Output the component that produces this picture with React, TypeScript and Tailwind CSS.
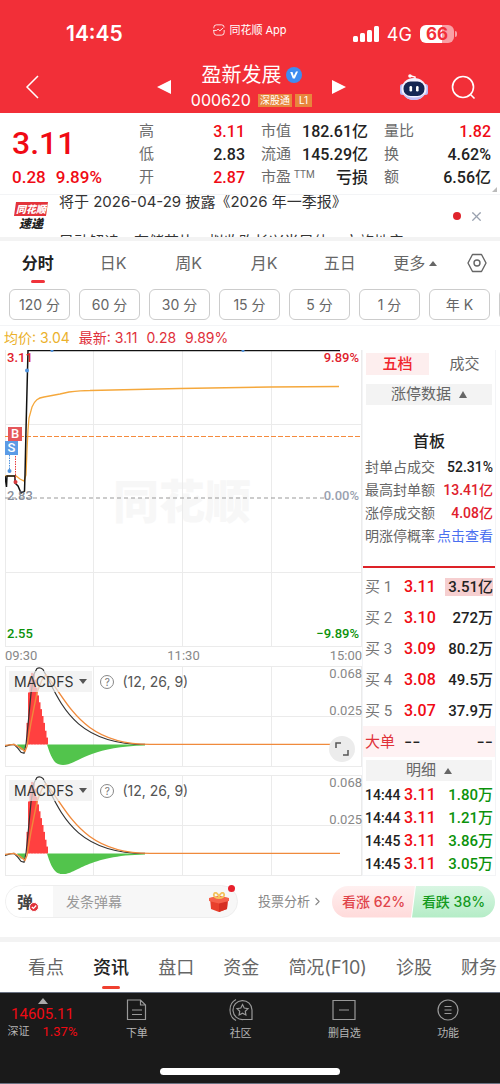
import { ReactNode } from "react";
import { FiChevronRight, FiX } from "react-icons/fi";
import clsx from "clsx";

interface Stat {
  label: string;
  value: string;
  sup?: string;
  red?: boolean;
}

const statGroups: Stat[][] = [
  [
    { label: "高", value: "3.11", red: true },
    { label: "低", value: "2.83" },
    { label: "开", value: "2.87", red: true },
  ],
  [
    { label: "市值", value: "182.61亿" },
    { label: "流通", value: "145.29亿" },
    { label: "市盈", value: "亏损", sup: "TTM" },
  ],
  [
    { label: "量比", value: "1.82", red: true },
    { label: "换", value: "4.62%" },
    { label: "额", value: "6.56亿" },
  ],
];

const periods = ["分时", "日K", "周K", "月K", "五日"];
const minutes = ["120 分", "60 分", "30 分", "15 分", "5 分", "1 分", "年 K", "季 K"];

const limitRows = [
  { label: "封单占成交", value: "52.31%", color: "text-[#222]" },
  { label: "最高封单额", value: "13.41亿", color: "text-[#e0202c]" },
  { label: "涨停成交额", value: "4.08亿", color: "text-[#e0202c]" },
];

const bids = [
  { label: "买 1", price: "3.11", amount: "3.51亿" },
  { label: "买 2", price: "3.10", amount: "272万" },
  { label: "买 3", price: "3.09", amount: "80.2万" },
  { label: "买 4", price: "3.08", amount: "49.5万" },
  { label: "买 5", price: "3.07", amount: "37.9万" },
];

const trades = [
  { time: "14:44", price: "3.11", amount: "1.80万" },
  { time: "14:44", price: "3.11", amount: "1.21万" },
  { time: "14:45", price: "3.11", amount: "3.86万" },
  { time: "14:45", price: "3.11", amount: "3.05万" },
];

const infoTabs = ["看点", "资讯", "盘口", "资金", "简况(F10)", "诊股", "财务"];

// one red bar every 1.5 units, growing up from the zero line
const redBars = [22, 53, 69, 73, 72, 66, 58, 50, 43, 36, 29, 22, 14, 7];

function StatusBar() {
  return (
    <div className="grid grid-cols-3 items-center px-[30px] pt-5">
      <p className="pl-9 text-[21px] leading-7 font-semibold">14:45</p>
      <p className="flex -translate-y-1 items-center justify-center gap-1 whitespace-nowrap text-[11px]">
        <svg viewBox="0 0 14 14" className="h-3 w-3" fill="none" stroke="currentColor">
          <path d="M1 5V4a3 3 0 0 1 3-3h6a3 3 0 0 1 3 3M13 7v3a3 3 0 0 1-3 3H4a3 3 0 0 1-3-3V8M0 7.500h4l2-1.500 2 2 4-3.500" />
        </svg>
        同花顺 App
      </p>
      <div className="flex items-center justify-end gap-2 pr-4">
        <svg viewBox="0 0 26 16" className="h-4 w-[26px] shrink-0" fill="currentColor">
          <rect x="0" y="10" width="5" height="6" rx="1.500" />
          <rect x="7" y="7" width="5" height="9" rx="1.500" />
          <rect x="14" y="4" width="5" height="12" rx="1.500" />
          <rect x="21" y="0" width="5" height="16" rx="1.500" />
        </svg>
        <span className="text-[18px]">4G</span>
        <span className="relative rounded-md bg-linear-to-r from-white from-65% to-[#f9a0a5] to-65% px-[6px] text-[17px] leading-[18px] font-bold text-[#f22f38]">
          66
          <i className="absolute top-[6px] -right-[3px] h-[6px] w-[2px] rounded-r bg-[#f9a0a5]" />
        </span>
      </div>
    </div>
  );
}

function RobotIcon() {
  return (
    <svg viewBox="0 0 30 28" className="h-7 w-[30px]">
      <circle cx="11" cy="3" r="1.800" fill="#fff" />
      <path d="M12 3 16 4v3" stroke="#fff" strokeWidth="1.500" fill="none" />
      <rect x="1" y="11" width="5" height="11" rx="2.500" fill="#b9b8f5" />
      <rect x="24" y="11" width="5" height="11" rx="2.500" fill="#b9b8f5" />
      <ellipse cx="15" cy="16" rx="12.500" ry="11" fill="#f3f1ff" />
      <path d="M4 20c2 5 6 7 11 7s9-2 11-7c-2 3-6 4.500-11 4.500S6 23 4 20z" fill="#c3bdf4" />
      <rect x="4.500" y="8.500" width="21" height="14.500" rx="7" fill="#162653" />
      <rect x="10.500" y="13" width="2.600" height="5.500" rx="1.200" fill="#fff" />
      <rect x="17" y="13" width="2.600" height="5.500" rx="1.200" fill="#fff" />
    </svg>
  );
}

function Header() {
  return (
    <header className="bg-[#f22f38] pb-px text-white">
      <StatusBar />
      <div className="flex items-center justify-between pt-[14px] pr-6 pl-[25px]">
        <button aria-label="返回" className="w-[79px]">
          <svg viewBox="0 0 14 24" className="h-6 w-[14px]" fill="none" stroke="currentColor" strokeWidth="1.500">
            <path d="M13 1 2 12l11 11" />
          </svg>
        </button>
        <div className="flex items-center gap-5">
          <button aria-label="上一只">
            <svg viewBox="0 0 14 14" className="h-[14px] w-[14px]" fill="currentColor">
              <path d="M14 0v14L0 7z" />
            </svg>
          </button>
          <div>
            <h1 className="flex h-[26px] items-center justify-center gap-1 text-[20px] leading-[26px]">
              盈新发展
              <svg viewBox="0 0 16 16" className="h-4 w-4">
                <circle cx="8" cy="8" r="8" fill="#3f8cf0" />
                <path d="M4.200 5h2.300l1.300 4L10 4.500h2L8.800 11.500H6.800z" fill="#fff" />
              </svg>
            </h1>
            <p className="flex h-6 items-center gap-[3px] text-[16px] leading-6">
              <span className="mr-1">000620</span>
              <span className="bg-[#e8863c] px-[2px] text-[10px] leading-[13px]">深股通</span>
              <span className="bg-[#e8863c] px-1 text-[10px] leading-[13px]">L1</span>
            </p>
          </div>
          <button aria-label="下一只">
            <svg viewBox="0 0 14 14" className="h-[14px] w-[14px]" fill="currentColor">
              <path d="M0 0v14l14-7z" />
            </svg>
          </button>
        </div>
        <div className="flex items-center gap-[22px]">
          <button aria-label="助手">
            <RobotIcon />
          </button>
          <button aria-label="搜索">
            <svg viewBox="0 0 25 25" className="h-[25px] w-[25px]" fill="none" stroke="currentColor" strokeWidth="1.600">
              <circle cx="12" cy="12" r="10.500" />
              <path d="m19.500 19.500 4 4" />
            </svg>
          </button>
        </div>
      </div>
    </header>
  );
}

function Quote() {
  return (
    <section className="relative flex border-b border-gray-100 px-[9px] pt-[7px] pb-[5px] font-[Roboto,'Noto_Sans_CJK_SC',sans-serif]">
      <div className="w-[130px] pl-[3px] font-medium text-[#f00a14]">
        <p className="text-[32px] leading-[46px]">3.11</p>
        <p className="flex gap-[10px] text-[17px] leading-[23px]">
          <span>0.28</span>
          <span>9.89%</span>
        </p>
      </div>
      <div className="grid flex-1 grid-cols-[106px_107px_1fr] gap-x-4">
        {statGroups.map((group, i) => (
          <dl key={i}>
            {group.map((stat) => (
              <div key={stat.label} className="flex justify-between text-[16px] leading-[23px]">
                <dt className="flex text-[15px] text-[#6b6b6b]">
                  {stat.label}
                  {stat.sup && <span className="ml-[3px] text-[10px] leading-[18px]">{stat.sup}</span>}
                </dt>
                <dd className={clsx("font-medium", stat.red ? "text-[#f00a14]" : "text-[#222]")}>
                  {stat.value}
                </dd>
              </div>
            ))}
          </dl>
        ))}
      </div>
      <svg viewBox="0 0 5 5" className="absolute right-[3px] bottom-[2px] h-[5px] w-[5px]" fill="#bbb">
        <path d="M5 0v5H0z" />
      </svg>
    </section>
  );
}

function News() {
  return (
    <section className="flex h-[46px] overflow-hidden border-b-4 border-[#f3f3f3] pr-4 pl-[14px]">
      <div className="mt-[7px] w-[34px] shrink-0 text-center font-black italic">
        <p className="bg-[#e3343b] text-[10px] leading-[14px] text-white [clip-path:polygon(2px_0,100%_0,calc(100%-2px)_100%,0_100%)]">
          同花顺
        </p>
        <p className="text-[12px] leading-[15px] text-[#222]">速递</p>
      </div>
      <div className="-mt-[6px] ml-[11px] flex-1 text-[15px] leading-[26px] text-[#333]">
        <p>将于 2026-04-29 披露《2026 年一季报》</p>
        <p className="mt-[14px] whitespace-nowrap">异动解读：存储芯片，拟收购长兴半导体，文旅地产</p>
      </div>
      <div className="flex items-center gap-2">
        <i className="h-2 w-2 rounded-full bg-[#e0242c]" />
        <button aria-label="关闭" className="text-[15px] text-gray-400">
          <FiX />
        </button>
      </div>
    </section>
  );
}

function PeriodTabs() {
  return (
    <nav className="border-b border-gray-100 pb-[5px]">
      <div className="flex items-center text-[16px] text-[#666]">
        {periods.map((item, i) => (
          <button key={item} className={clsx("relative h-11 flex-1", i === 0 && "font-bold text-[#222]")}>
            {item}
            {i === 0 && (
              <i className="absolute bottom-[2px] left-1/2 h-[3px] w-[14px] -translate-x-1/2 rounded bg-[#f0333a]" />
            )}
          </button>
        ))}
        <button className="flex h-11 flex-1 items-center justify-center gap-1">
          更多
          <svg viewBox="0 0 8 5" className="h-[5px] w-2" fill="currentColor">
            <path d="M4 0l4 5H0z" />
          </svg>
        </button>
        <button aria-label="设置" className="flex w-[47px] justify-center">
          <svg viewBox="0 0 20 20" className="h-5 w-5" fill="none" stroke="currentColor" strokeWidth="1.400">
            <path d="M5.500 1.500h9l4.500 8.500-4.500 8.500h-9L1 10z" strokeLinejoin="round" />
            <circle cx="10" cy="10" r="3" />
          </svg>
        </button>
      </div>
      <div className="flex gap-[9px] overflow-hidden pt-1 pl-[9px]">
        {minutes.map((item) => (
          <button
            key={item}
            className="h-[31px] w-[61px] shrink-0 rounded-md border border-[#ccc] text-[14px] text-[#666]"
          >
            {item}
          </button>
        ))}
      </div>
    </nav>
  );
}

function PriceChart() {
  return (
    <div className="relative h-[297px] font-[Roboto,sans-serif] text-[13px] leading-4 font-medium">
      <p className="absolute top-[122px] left-[108px] font-['Noto_Sans_CJK_SC',sans-serif] text-[46px] leading-[52px] font-black text-[#f7f7f7]">
        同花顺
      </p>
      <svg viewBox="5 350 357 297" preserveAspectRatio="none" className="absolute inset-0 h-full w-full" fill="none">
        <path d="M5.500 350v297M93.500 350v297M182.500 350v297M271.500 350v297M361.500 350v297M5 424.500h357M5 572.500h357M5 646.500h357" stroke="#ebebeb" />
        <path d="M5 498h356" stroke="#999" strokeDasharray="4 3" />
        <path d="M5 436.500h356" stroke="#f58a3c" strokeWidth="1.200" strokeDasharray="5 2" />
        <path d="M5 476h11l4 3 4 2 2-6 1-25 1-20 1-12 3-11c3-7 6-9 12-10l16-3 9-2c8-1 12-1.500 21-1.500l90-2 90-1.500 69-.5" stroke="#f5a83c" strokeWidth="1.300" />
        <path d="M5 476l1.500 11 .5-11h8v7l3 3 3 7 2-1 1.500-1 .5-16 1-45 2-79.500H340" stroke="#111" strokeWidth="1.500" />
        <path d="M9.500 455v14" stroke="#4f93df" strokeDasharray="1.500 1" />
        <path d="M15.500 441v38" stroke="#e83c3c" strokeDasharray="1.500 1" />
        <g fill="#4f93df">
          <circle cx="9.500" cy="471" r="2" />
          <circle cx="27" cy="370.500" r="2" />
          <circle cx="52" cy="350.500" r="1.500" />
          <circle cx="243" cy="350.500" r="1.500" />
        </g>
        <circle cx="15.500" cy="482" r="2" fill="#d8383c" />
      </svg>
      <span className="absolute top-0 left-[2px] text-[#e0202c]">3.11</span>
      <span className="absolute top-0 right-[3px] text-[#e0202c]">9.89%</span>
      <span className="absolute top-[138px] left-[2px] text-gray-500/80">2.83</span>
      <span className="absolute top-[138px] right-[3px] bg-white text-gray-400">0.00%</span>
      <span className="absolute top-[276px] left-[2px] text-[#0b920b]">2.55</span>
      <span className="absolute top-[276px] right-[3px] text-[#0b920b]">−9.89%</span>
      <span className="absolute top-[77px] left-[3px] h-[14px] w-[14px] bg-[#e5575b] text-center leading-[14px] text-white">
        B
      </span>
      <span className="absolute top-[91px] left-0 h-[14px] w-[13px] bg-[#5b9be6] text-center leading-[14px] text-white">
        S
      </span>
    </div>
  );
}

function MacdChart({ name, children }: { name: string; children?: ReactNode }) {
  return (
    <div className="relative h-[101px] border-y border-[#ebebeb]">
      <svg viewBox="5 666 357 101" preserveAspectRatio="none" className="absolute inset-0 h-full w-full" fill="none">
        <path d="M5.500 666v101M93.500 666v101M182.500 666v101M271.500 666v101M361.500 666v101M5 716.500h357" stroke="#ebebeb" />
        {redBars.map((h, i) => (
          <rect key={i} x={26.5 + i * 1.5} y={745 - h} width="2" height={h} fill="#ff4040" />
        ))}
        <path d="M47 745c5 17 9 21 16 21 14 0 24-19 82-20v-1z" fill="#52c44c" />
        <path d="M17 745h9l-2 6-4-1z" fill="#52c44c" />
        <path
          d="M5 747l5-1.500 4-.5 4 4 3 4 3 1 2-9 2-20 3-32 3-20 3-5.500q3-1.500 6 1C60 700 72 745 145 745"
          stroke="#333"
          strokeWidth="1.200"
        />
        <path
          d="M5 746l9-1 6 3 5 4 2-5 4-24 6-31 5-13 4-5C68 700 80 745 150 745H340"
          stroke="#f08a3c"
          strokeWidth="1.400"
        />
      </svg>
      <div className="absolute top-1 left-1 flex items-center text-[14px] text-[#555]">
        <button aria-label={name} className="flex h-[21px] items-center gap-[6px] bg-[#eee]/70 px-[5px] text-[#333]">
          MACDFS
          <svg viewBox="0 0 8 5" className="h-[5px] w-2" fill="#555">
            <path d="M0 0h8L4 5z" />
          </svg>
        </button>
        <i className="ml-2 h-[14px] w-[14px] rounded-full border border-[#888] text-center text-[10px] leading-3 text-[#777] not-italic">
          ?
        </i>
        <span className="ml-2">(12, 26, 9)</span>
      </div>
      <div className="absolute -top-px right-0 font-[Roboto,sans-serif] text-[13px] leading-4 text-[#888]">
        <p>0.068</p>
        <p className="mt-[21px]">0.025</p>
      </div>
      {children}
    </div>
  );
}

function OrderPanel() {
  return (
    <aside className="w-[134px] shrink-0 border-x border-b border-gray-100 font-[Roboto,'Noto_Sans_CJK_SC',sans-serif] text-[15px]">
      <div className="grid grid-cols-2 px-[3px] pt-[3px] leading-[22px]">
        <button className="bg-[#fdeeee] font-medium text-[#f0242c]">五档</button>
        <button className="pl-2 text-[#666]">成交</button>
      </div>
      <button className="mx-[3px] mt-[9px] flex h-[21px] w-[126px] items-center justify-center gap-2 bg-[#f3f3f3] text-[#666]">
        涨停数据
        <svg viewBox="0 0 8 7" className="h-[7px] w-2" fill="currentColor">
          <path d="M4 0l4 7H0z" />
        </svg>
      </button>
      <h2 className="mt-[25px] text-center text-[16px] leading-6 font-medium text-[#222]">首板</h2>
      <div className="mt-[2px] px-[2px] text-[14px] leading-[23px]">
        {limitRows.map((row) => (
          <p key={row.label} className="flex justify-between text-[#666]">
            {row.label}
            <span className={clsx("font-medium", row.color)}>{row.value}</span>
          </p>
        ))}
        <p className="flex justify-between text-[#666]">
          明涨停概率
          <a href="#odds" className="text-[#4a6ff0]">点击查看</a>
        </p>
      </div>
      <div className="mt-[18px] border-t-2 border-[#dd2228] pt-[3px]">
        <table className="w-full leading-5">
          <tbody>
            {bids.map((bid, i) => (
              <tr key={bid.label} className="h-[31px]">
                <td className="w-[41px] pl-[2px] text-[#777]">{bid.label}</td>
                <td className="text-[16px] font-medium text-[#f00a14]">{bid.price}</td>
                <td className="pr-[2px] text-right font-medium text-[#222]">
                  <span className={clsx(i === 0 && "bg-[#f6cfd0] pl-[3px]")}>{bid.amount}</span>
                </td>
              </tr>
            ))}
            <tr className="h-[31px] bg-[#fef2f3] text-[#222]">
              <td className="pl-[2px] text-[#e0323a]">大单</td>
              <td className="font-[Inter] text-[18px]">--</td>
              <td className="pr-[2px] text-right font-[Inter] text-[18px]">--</td>
            </tr>
          </tbody>
        </table>
      </div>
      <button className="mx-[3px] mt-[3px] flex h-[21px] w-[126px] items-center justify-center gap-2 bg-[#f3f3f3] text-[#666]">
        明细
        <svg viewBox="0 0 8 6" className="h-[6px] w-2" fill="currentColor">
          <path d="M4 0l4 6H0z" />
        </svg>
      </button>
      <table className="mt-[2px] w-full leading-5 font-medium">
        <tbody>
          {trades.map((trade, i) => (
            <tr key={i} className="h-[23px]">
              <td className="w-[41px] pl-[2px] text-[14px] text-[#222]">{trade.time}</td>
              <td className="text-[16px] text-[#f00a14]">{trade.price}</td>
              <td className="pr-[2px] text-right text-[#0b920b]">{trade.amount}</td>
            </tr>
          ))}
        </tbody>
      </table>
    </aside>
  );
}

function Charts() {
  return (
    <section className="flex pr-1 pl-[5px]">
      <div className="min-w-0 flex-1">
        <PriceChart />
        <div className="grid h-[19px] grid-cols-3 font-[Roboto,sans-serif] text-[13px] leading-[18px] text-[#888]">
          <span>09:30</span>
          <span className="text-center">11:30</span>
          <span className="text-right">15:00</span>
        </div>
        <MacdChart name="指标一">
          <button
            aria-label="全屏"
            className="absolute right-[7px] bottom-1 grid h-[26px] w-[26px] place-items-center rounded-full bg-[#ececec]"
          >
            <svg viewBox="0 0 14 14" className="h-[14px] w-[14px]" fill="none" stroke="#555" strokeWidth="1.500">
              <path d="M1 6V1h5M13 8v5H8" />
            </svg>
          </button>
        </MacdChart>
        <div className="h-2" />
        <MacdChart name="指标二" />
      </div>
      <OrderPanel />
    </section>
  );
}

function GiftIcon() {
  return (
    <svg viewBox="0 0 20 20" className="h-5 w-5">
      <path d="M1 6 10 4l9 2-1 11-8 3-8-3z" fill="#e8402c" />
      <path d="M10 9v11l8-3 .8-9z" fill="#d62f22" />
      <path d="M0 6 10 4l10 2v3l-10 2.500L0 9z" fill="#f5604a" />
      <path d="M10 6C7 6 4 4.500 5 2s4-1 5 3c1-4 4-5.500 5-3s-2 4-5 4z" fill="none" stroke="#f3c25c" strokeWidth="1.800" />
    </svg>
  );
}

function Barrage() {
  return (
    <section className="flex items-center border-b-[5px] border-[#f3f3f3] pt-[9px] pr-[5px] pb-[19px] pl-[5px]">
      <div className="relative flex h-[33px] w-[233px] items-center rounded-full border border-[#eee] bg-[#f7f7f7]">
        <span className="relative flex h-full w-[47px] items-center rounded-l-full bg-white pl-[11px] text-[16px] font-bold text-[#444]">
          弹
          <svg viewBox="0 0 10 10" className="absolute right-[14px] bottom-[5px] h-[10px] w-[10px]" fill="none">
            <circle cx="5" cy="5" r="4.500" fill="#e0323a" stroke="#fff" />
            <path d="m2.800 5 1.700 1.500 2.700-3" stroke="#fff" strokeWidth="1.200" />
          </svg>
        </span>
        <input
          aria-label="弹幕"
          placeholder="发条弹幕"
          className="w-0 flex-1 pl-[13px] text-[14px] outline-none placeholder:text-[#999]"
        />
        <button aria-label="礼物" className="mr-2">
          <GiftIcon />
        </button>
        <i className="absolute -top-px right-[2px] h-[7px] w-[7px] rounded-full bg-[#e8202c]" />
      </div>
      <a href="#vote" className="mr-2 ml-auto flex items-center gap-px text-[13px] text-[#888]">
        投票分析
        <FiChevronRight />
      </a>
      <div className="flex text-[14px] leading-8 font-medium">
        <button className="w-[83px] rounded-l-full bg-linear-to-b from-[#fff0f0] to-[#ffdada] text-[#e0444a] [clip-path:polygon(0_0,100%_0,calc(100%-4px)_100%,0_100%)]">
          看涨 62%
        </button>
        <button className="-ml-[3px] w-[83px] rounded-r-full bg-linear-to-b from-[#d9f6e3] to-[#b4ecc6] text-[#149a1e] [clip-path:polygon(4px_0,100%_0,100%_100%,0_100%)]">
          看跌 38%
        </button>
      </div>
    </section>
  );
}

function InfoTabs() {
  return (
    <nav className="flex h-[50px] justify-between overflow-hidden pr-[3px] pl-7 text-[18px] whitespace-nowrap text-[#666]">
      {infoTabs.map((tab) => (
        <button key={tab} className={clsx("relative", tab === "资讯" && "font-medium text-[#222]")}>
          {tab}
          {tab === "资讯" && <i className="absolute bottom-[3px] left-[9px] h-[3px] w-[18px] rounded bg-[#f04030]" />}
        </button>
      ))}
    </nav>
  );
}

function BottomItem({ label, children }: { label: string; children: ReactNode }) {
  return (
    <button className="flex flex-1 flex-col items-center gap-[3px] text-[11px] leading-4">
      <svg viewBox="0 0 24 24" className="h-6 w-6" fill="none" stroke="#999" strokeWidth="1.200">
        {children}
      </svg>
      {label}
    </button>
  );
}

function BottomBar() {
  return (
    <footer className="border-t border-b border-gray-500 bg-[#1a1a1a] text-[#b5b5b5]">
      <div className="flex h-[75px] pt-[5px]">
        <div className="flex w-[85px] flex-col items-center font-[Roboto,'Noto_Sans_CJK_SC',sans-serif] text-[#f00a14]">
          <svg viewBox="0 0 10 6" className="h-[6px] w-[10px]" fill="#aaa">
            <path d="M5 0l5 6H0z" />
          </svg>
          <p className="text-[15px] leading-5">14605.11</p>
          <p className="flex gap-[13px] text-[13px] leading-4">
            <span className="text-[11px] text-[#b5b5b5]">深证</span>1.37%
          </p>
        </div>
        <BottomItem label="下单">
          <path d="M2.500 2h13l5 5v14.500h-18zM15.500 2v5h5M7 12h10M7 16.500h10" />
        </BottomItem>
        <BottomItem label="社区">
          <path d="M23 21.500h-8.500a9.500 9.500 0 1 1 8.500-9.500zM7 1.500c-8 4-8 17 0 21" />
          <path d="m13.500 6.500 1.700 3.500 3.800.6-2.700 2.700.6 3.700-3.400-1.800-3.400 1.800.6-3.700L8 10.600l3.800-.6z" />
        </BottomItem>
        <BottomItem label="删自选">
          <path d="M1 2.500h22v19H1zM7 12h10" />
        </BottomItem>
        <BottomItem label="功能">
          <circle cx="12" cy="12" r="10" />
          <path d="M8.500 8.500h7M8.500 12h7M8.500 15.500h7" />
        </BottomItem>
      </div>
      <div className="mx-auto mb-2 h-[7px] w-[180px] rounded-full bg-white" />
    </footer>
  );
}

function App() {
  return (
    <main className="min-h-screen overflow-hidden bg-white font-[Inter,'Noto_Sans_CJK_SC',sans-serif]">
      <Header />
      <Quote />
      <News />
      <PeriodTabs />
      <p className="flex gap-[9px] px-1 text-[14px] leading-6 text-[#e0303a]">
        <span className="text-[#ebb12c]">均价: 3.04</span>
        <span>最新: 3.11</span>
        <span>0.28</span>
        <span>9.89%</span>
      </p>
      <Charts />
      <Barrage />
      <InfoTabs />
      <BottomBar />
    </main>
  );
}

export default App;
